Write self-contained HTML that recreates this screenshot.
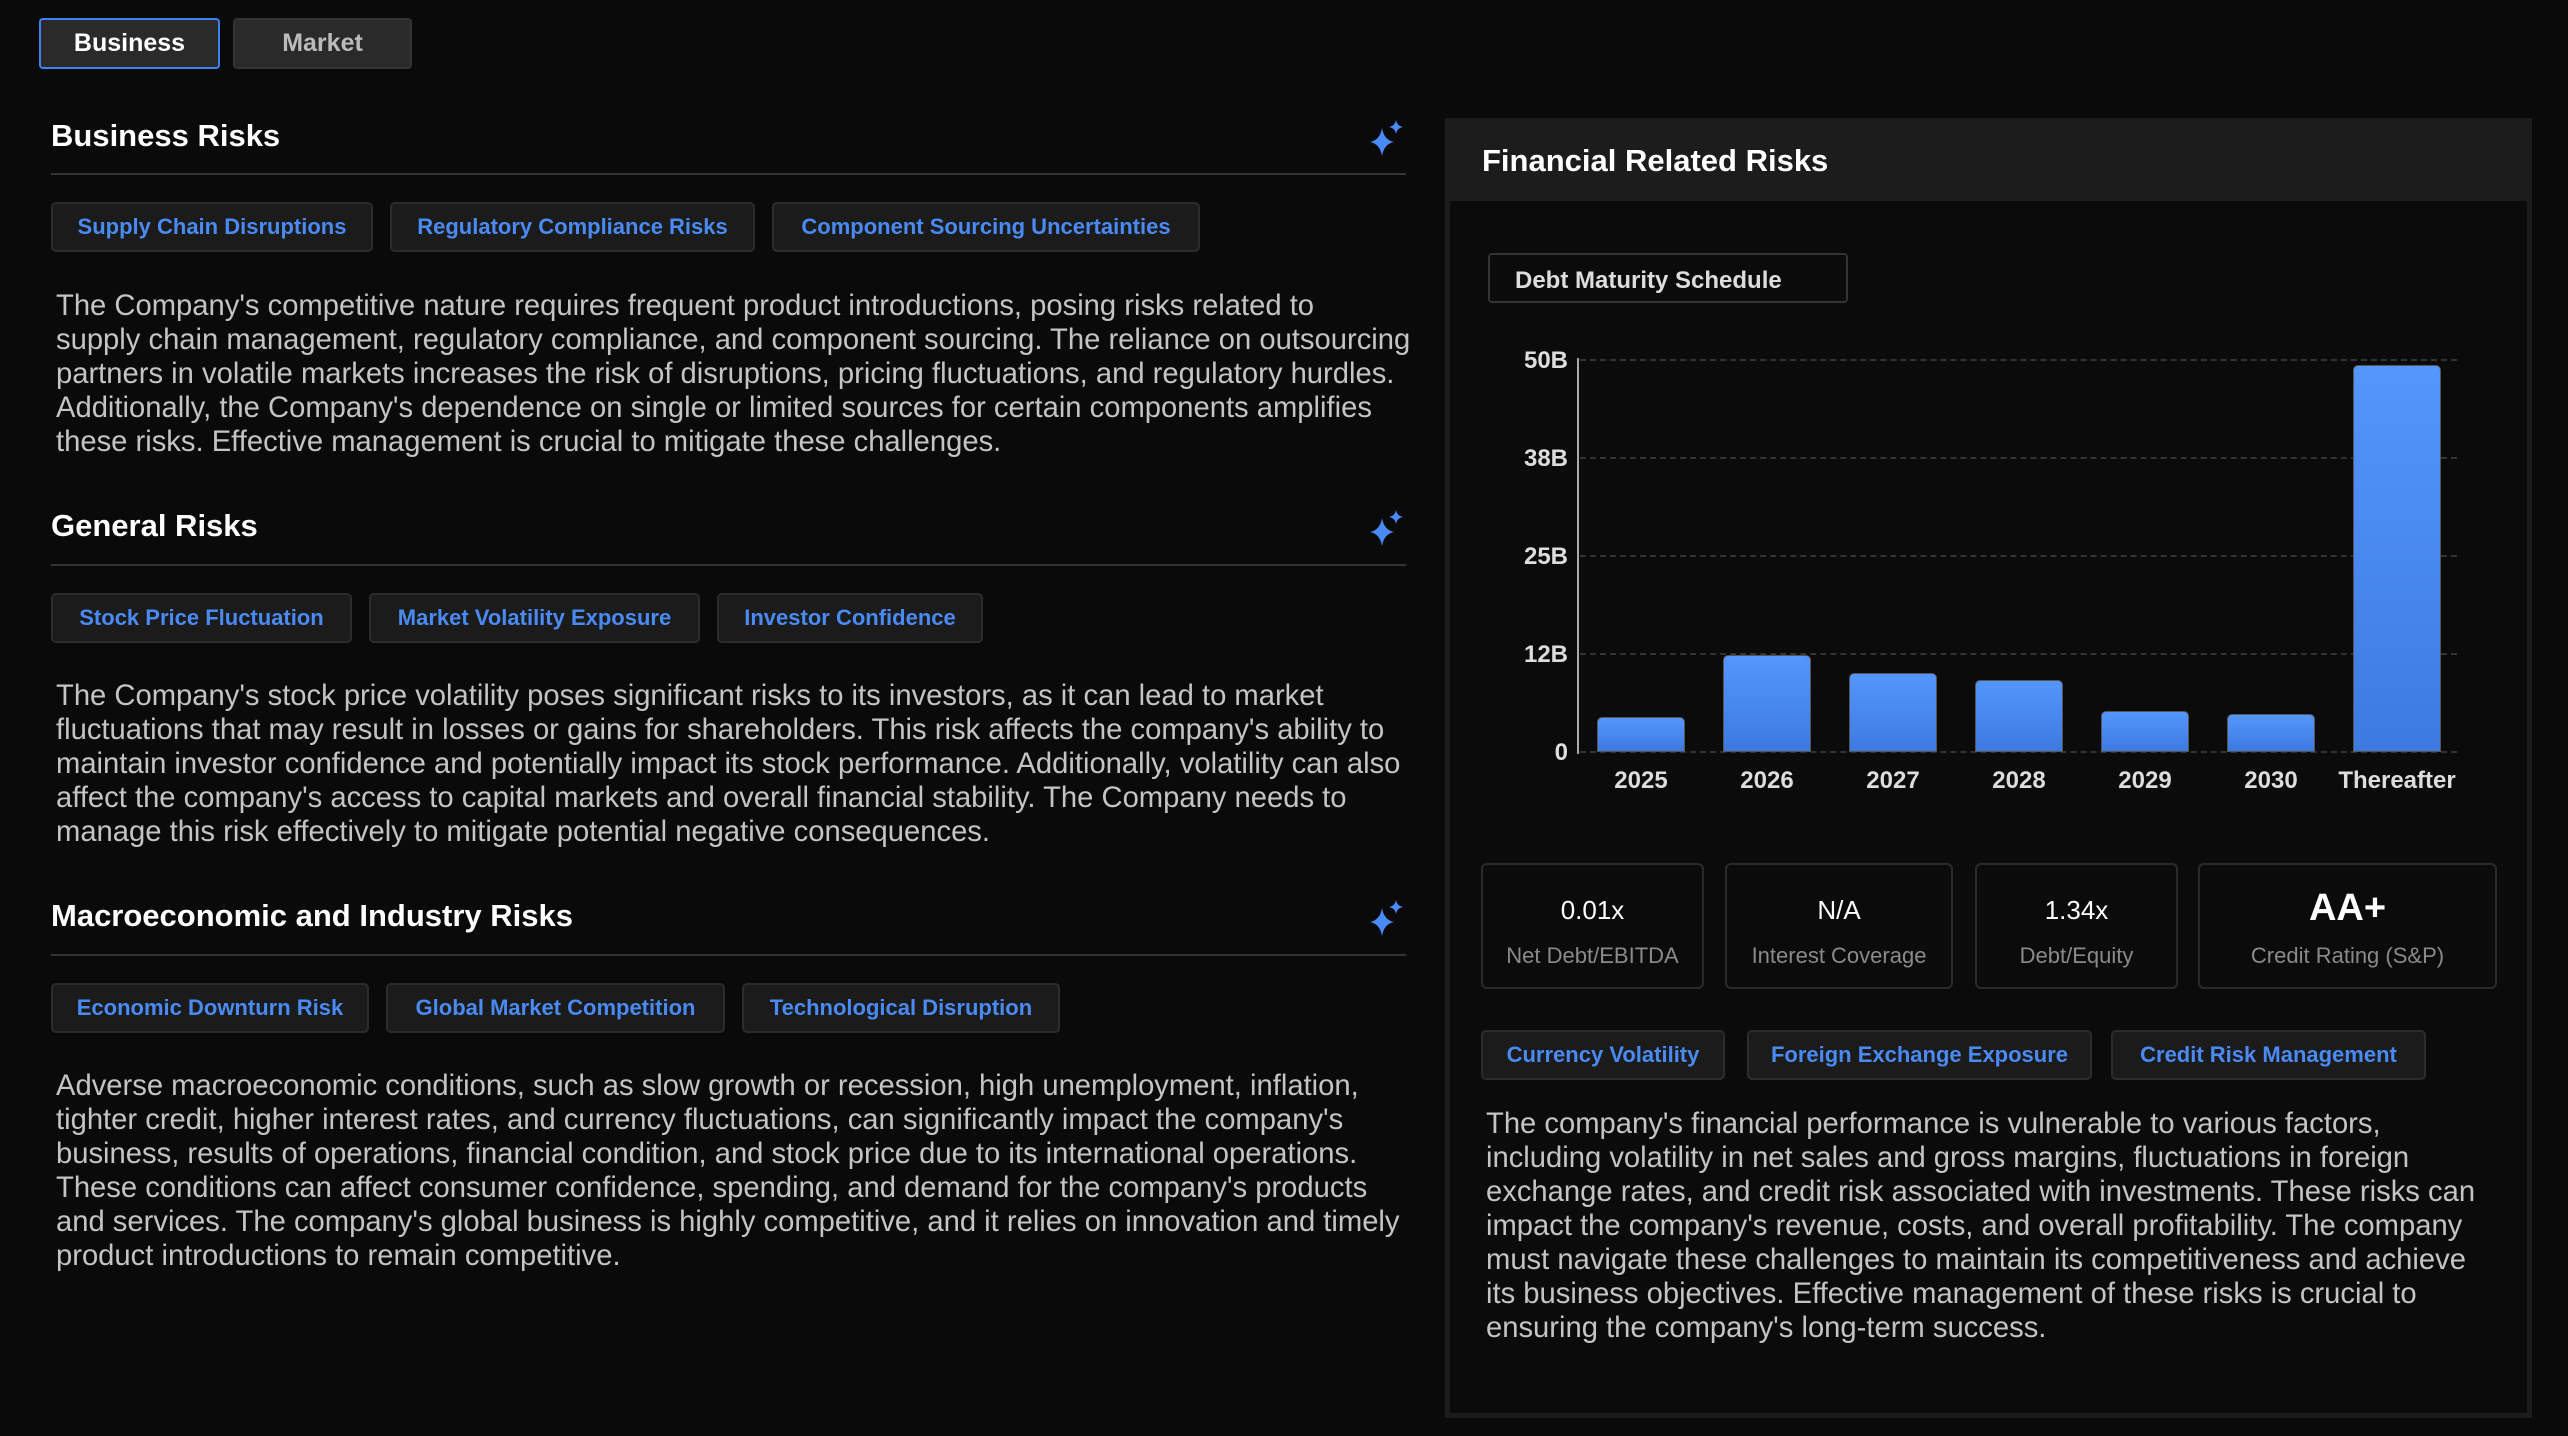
<!DOCTYPE html>
<html><head><meta charset="utf-8"><style>
*{margin:0;padding:0;box-sizing:border-box}
body{width:2568px;height:1436px;background:#0a0a0a;font-family:"Liberation Sans",sans-serif;position:relative;overflow:hidden;color:#fff}
.a{position:absolute}
.tab{position:absolute;top:18px;height:51px;border-radius:4px;background:#2a2a2a;font-size:25px;font-weight:bold;display:flex;align-items:center;justify-content:center}
.h{position:absolute;font-size:31px;font-weight:bold;color:#fff}
.div{position:absolute;left:51px;width:1355px;height:2px;background:#333}
.tag{position:absolute;height:50px;border:2px solid #2c2c2c;border-radius:5px;background:#1b1b1b;color:#4a8af4;font-size:22px;font-weight:bold;display:flex;align-items:center;justify-content:center;white-space:nowrap}
.p{position:absolute;font-size:29.2px;line-height:34px;color:#c4c4c4;white-space:nowrap}
.sp{position:absolute;width:40px;height:40px}
.stat{position:absolute;top:863px;height:126px;border:2px solid #2a2a2a;border-radius:6px;text-align:center}
.stat .v{position:absolute;top:30px;width:100%;font-size:26px;color:#fff}
.stat .l{position:absolute;top:78px;width:100%;font-size:22px;color:#8a8a8a}
.yl{position:absolute;font-size:24px;font-weight:bold;color:#ddd;width:60px;text-align:right}
.grid{position:absolute;left:1580px;width:877px;border-top:2px dashed #333}
.bar{position:absolute;width:88px;border-radius:5px 5px 0 0;background:linear-gradient(#5596fc,#3d7ae0);border:1px solid #555}
.xl{position:absolute;top:767px;font-size:24px;font-weight:bold;color:#ddd;width:140px;text-align:center}
</style></head><body>
<div class="tab" style="left:39px;width:181px;border:2px solid #3d82f0;color:#fff">Business</div>
<div class="tab" style="left:233px;width:179px;border:2px solid #333;color:#bbb">Market</div>

<svg class="sp" style="left:1366px;top:118px" viewBox="0 0 40 40"><path fill="#4a8af4" d="M16 10 Q18 22 28 24 Q18 26 16 38 Q14 26 4 24 Q14 22 16 10Z M30 2 Q31 8 37 9 Q31 10 30 16 Q29 10 23 9 Q29 8 30 2Z"/></svg>
<div class="h" style="left:51px;top:118px">Business Risks</div>
<div class="div" style="top:173px"></div>
<div class="tag" style="left:51px;top:202px;width:322px">Supply Chain Disruptions</div>
<div class="tag" style="left:390px;top:202px;width:365px">Regulatory Compliance Risks</div>
<div class="tag" style="left:772px;top:202px;width:428px">Component Sourcing Uncertainties</div>
<div class="p" style="left:56px;top:289px">The Company's competitive nature requires frequent product introductions, posing risks related to<br>supply chain management, regulatory compliance, and component sourcing. The reliance on outsourcing<br>partners in volatile markets increases the risk of disruptions, pricing fluctuations, and regulatory hurdles.<br>Additionally, the Company's dependence on single or limited sources for certain components amplifies<br>these risks. Effective management is crucial to mitigate these challenges.</div>

<svg class="sp" style="left:1366px;top:508px" viewBox="0 0 40 40"><path fill="#4a8af4" d="M16 10 Q18 22 28 24 Q18 26 16 38 Q14 26 4 24 Q14 22 16 10Z M30 2 Q31 8 37 9 Q31 10 30 16 Q29 10 23 9 Q29 8 30 2Z"/></svg>
<div class="h" style="left:51px;top:508px">General Risks</div>
<div class="div" style="top:564px"></div>
<div class="tag" style="left:51px;top:593px;width:301px">Stock Price Fluctuation</div>
<div class="tag" style="left:369px;top:593px;width:331px">Market Volatility Exposure</div>
<div class="tag" style="left:717px;top:593px;width:266px">Investor Confidence</div>
<div class="p" style="left:56px;top:679px">The Company's stock price volatility poses significant risks to its investors, as it can lead to market<br>fluctuations that may result in losses or gains for shareholders. This risk affects the company's ability to<br>maintain investor confidence and potentially impact its stock performance. Additionally, volatility can also<br>affect the company's access to capital markets and overall financial stability. The Company needs to<br>manage this risk effectively to mitigate potential negative consequences.</div>

<svg class="sp" style="left:1366px;top:898px" viewBox="0 0 40 40"><path fill="#4a8af4" d="M16 10 Q18 22 28 24 Q18 26 16 38 Q14 26 4 24 Q14 22 16 10Z M30 2 Q31 8 37 9 Q31 10 30 16 Q29 10 23 9 Q29 8 30 2Z"/></svg>
<div class="h" style="left:51px;top:898px">Macroeconomic and Industry Risks</div>
<div class="div" style="top:954px"></div>
<div class="tag" style="left:51px;top:983px;width:318px">Economic Downturn Risk</div>
<div class="tag" style="left:386px;top:983px;width:339px">Global Market Competition</div>
<div class="tag" style="left:742px;top:983px;width:318px">Technological Disruption</div>
<div class="p" style="left:56px;top:1069px">Adverse macroeconomic conditions, such as slow growth or recession, high unemployment, inflation,<br>tighter credit, higher interest rates, and currency fluctuations, can significantly impact the company's<br>business, results of operations, financial condition, and stock price due to its international operations.<br>These conditions can affect consumer confidence, spending, and demand for the company's products<br>and services. The company's global business is highly competitive, and it relies on innovation and timely<br>product introductions to remain competitive.</div>

<div class="a" style="left:1445px;top:118px;width:1087px;height:1300px;background:#1c1c1c"></div>
<div class="a" style="left:1450px;top:201px;width:1077px;height:1212px;background:#0b0b0b"></div>
<div class="h" style="left:1482px;top:143px">Financial Related Risks</div>
<div class="a" style="left:1488px;top:253px;width:360px;height:50px;border:2px solid #333;border-radius:4px;font-size:24px;font-weight:bold;color:#ddd;padding:12px 0 0 25px">Debt Maturity Schedule</div>

<div class="grid" style="top:359px"></div>
<div class="grid" style="top:457px"></div>
<div class="grid" style="top:555px"></div>
<div class="grid" style="top:653px"></div>
<div class="grid" style="top:751px"></div>
<div class="a" style="left:1577px;top:358px;width:2px;height:396px;background:#aaa"></div>
<div class="yl" style="left:1508px;top:347px">50B</div>
<div class="yl" style="left:1508px;top:445px">38B</div>
<div class="yl" style="left:1508px;top:543px">25B</div>
<div class="yl" style="left:1508px;top:641px">12B</div>
<div class="yl" style="left:1508px;top:739px">0</div>
<div class="bar" style="left:1597px;top:717px;height:35px"></div>
<div class="bar" style="left:1723px;top:655px;height:97px"></div>
<div class="bar" style="left:1849px;top:673px;height:79px"></div>
<div class="bar" style="left:1975px;top:680px;height:72px"></div>
<div class="bar" style="left:2101px;top:711px;height:41px"></div>
<div class="bar" style="left:2227px;top:714px;height:38px"></div>
<div class="bar" style="left:2353px;top:365px;height:387px"></div>
<div class="xl" style="left:1571px">2025</div>
<div class="xl" style="left:1697px">2026</div>
<div class="xl" style="left:1823px">2027</div>
<div class="xl" style="left:1949px">2028</div>
<div class="xl" style="left:2075px">2029</div>
<div class="xl" style="left:2201px">2030</div>
<div class="xl" style="left:2327px">Thereafter</div>

<div class="stat" style="left:1481px;width:223px"><div class="v">0.01x</div><div class="l">Net Debt/EBITDA</div></div>
<div class="stat" style="left:1725px;width:228px"><div class="v">N/A</div><div class="l">Interest Coverage</div></div>
<div class="stat" style="left:1975px;width:203px"><div class="v">1.34x</div><div class="l">Debt/Equity</div></div>
<div class="stat" style="left:2198px;width:299px"><div class="v" style="top:22px;font-size:38px;font-weight:bold">AA+</div><div class="l">Credit Rating (S&amp;P)</div></div>

<div class="tag" style="left:1481px;top:1030px;width:244px">Currency Volatility</div>
<div class="tag" style="left:1747px;top:1030px;width:345px">Foreign Exchange Exposure</div>
<div class="tag" style="left:2111px;top:1030px;width:315px">Credit Risk Management</div>
<div class="p" style="left:1486px;top:1107px">The company's financial performance is vulnerable to various factors,<br>including volatility in net sales and gross margins, fluctuations in foreign<br>exchange rates, and credit risk associated with investments. These risks can<br>impact the company's revenue, costs, and overall profitability. The company<br>must navigate these challenges to maintain its competitiveness and achieve<br>its business objectives. Effective management of these risks is crucial to<br>ensuring the company's long-term success.</div>
</body></html>
